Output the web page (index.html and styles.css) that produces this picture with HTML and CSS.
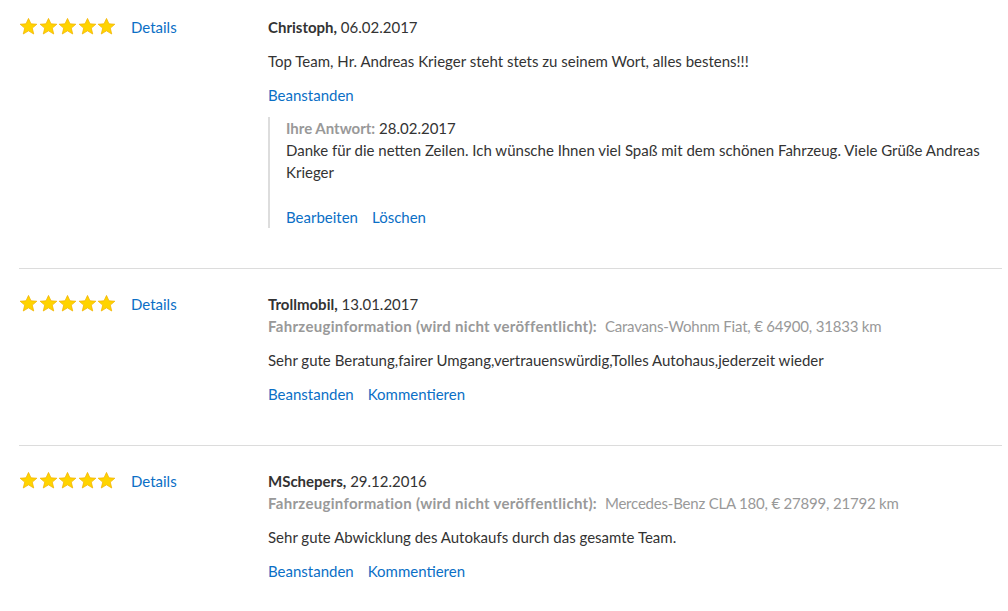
FILE: index.html
```html
<!DOCTYPE html>
<html lang="de">
<head>
  <meta charset="UTF-8">
  <title>Bewertungen</title>
  <link rel="stylesheet" href="styles.css">
</head>
<body>
  <div class="reviews">
    <div class="review">
      <div class="rating">
        <div class="stars">
          <svg viewBox="0 0 20 20"><polygon points="10,1.5 12.6,7.2 18.8,7.6 14,11.7 15.5,17.9 10,14.6 4.5,17.9 6,11.7 1.2,7.6 7.4,7.2"/></svg>
          <svg viewBox="0 0 20 20"><polygon points="10,1.5 12.6,7.2 18.8,7.6 14,11.7 15.5,17.9 10,14.6 4.5,17.9 6,11.7 1.2,7.6 7.4,7.2"/></svg>
          <svg viewBox="0 0 20 20"><polygon points="10,1.5 12.6,7.2 18.8,7.6 14,11.7 15.5,17.9 10,14.6 4.5,17.9 6,11.7 1.2,7.6 7.4,7.2"/></svg>
          <svg viewBox="0 0 20 20"><polygon points="10,1.5 12.6,7.2 18.8,7.6 14,11.7 15.5,17.9 10,14.6 4.5,17.9 6,11.7 1.2,7.6 7.4,7.2"/></svg>
          <svg viewBox="0 0 20 20"><polygon points="10,1.5 12.6,7.2 18.8,7.6 14,11.7 15.5,17.9 10,14.6 4.5,17.9 6,11.7 1.2,7.6 7.4,7.2"/></svg>
        </div>
        <a class="link" href="#">Details</a>
      </div>
      <div class="content">
        <div class="author"><strong>Christoph,</strong> 06.02.2017</div>
        <p class="text">Top Team, Hr. Andreas Krieger steht stets zu seinem Wort, alles bestens!!!</p>
        <div class="actions">
          <a class="link" href="#">Beanstanden</a>
        </div>
        <div class="reply">
          <div class="reply-meta"><span class="label">Ihre Antwort:</span> 28.02.2017</div>
          <div class="reply-text">Danke für die netten Zeilen. Ich wünsche Ihnen viel Spaß mit dem schönen Fahrzeug. Viele Grüße Andreas Krieger</div>
          <div class="actions reply-actions">
            <a class="link" href="#">Bearbeiten</a>
            <a class="link" href="#">Löschen</a>
          </div>
        </div>
      </div>
    </div>

    <div class="review">
      <div class="rating">
        <div class="stars">
          <svg viewBox="0 0 20 20"><polygon points="10,1.5 12.6,7.2 18.8,7.6 14,11.7 15.5,17.9 10,14.6 4.5,17.9 6,11.7 1.2,7.6 7.4,7.2"/></svg>
          <svg viewBox="0 0 20 20"><polygon points="10,1.5 12.6,7.2 18.8,7.6 14,11.7 15.5,17.9 10,14.6 4.5,17.9 6,11.7 1.2,7.6 7.4,7.2"/></svg>
          <svg viewBox="0 0 20 20"><polygon points="10,1.5 12.6,7.2 18.8,7.6 14,11.7 15.5,17.9 10,14.6 4.5,17.9 6,11.7 1.2,7.6 7.4,7.2"/></svg>
          <svg viewBox="0 0 20 20"><polygon points="10,1.5 12.6,7.2 18.8,7.6 14,11.7 15.5,17.9 10,14.6 4.5,17.9 6,11.7 1.2,7.6 7.4,7.2"/></svg>
          <svg viewBox="0 0 20 20"><polygon points="10,1.5 12.6,7.2 18.8,7.6 14,11.7 15.5,17.9 10,14.6 4.5,17.9 6,11.7 1.2,7.6 7.4,7.2"/></svg>
        </div>
        <a class="link" href="#">Details</a>
      </div>
      <div class="content">
        <div class="author"><strong>Trollmobil,</strong> 13.01.2017</div>
        <div class="vehicle"><span class="label">Fahrzeuginformation (wird nicht veröffentlicht):</span> <span class="value">Caravans-Wohnm Fiat, € 64900, 31833 km</span></div>
        <p class="text">Sehr gute Beratung,fairer Umgang,vertrauenswürdig,Tolles Autohaus,jederzeit wieder</p>
        <div class="actions">
          <a class="link" href="#">Beanstanden</a>
          <a class="link" href="#">Kommentieren</a>
        </div>
      </div>
    </div>

    <div class="review">
      <div class="rating">
        <div class="stars">
          <svg viewBox="0 0 20 20"><polygon points="10,1.5 12.6,7.2 18.8,7.6 14,11.7 15.5,17.9 10,14.6 4.5,17.9 6,11.7 1.2,7.6 7.4,7.2"/></svg>
          <svg viewBox="0 0 20 20"><polygon points="10,1.5 12.6,7.2 18.8,7.6 14,11.7 15.5,17.9 10,14.6 4.5,17.9 6,11.7 1.2,7.6 7.4,7.2"/></svg>
          <svg viewBox="0 0 20 20"><polygon points="10,1.5 12.6,7.2 18.8,7.6 14,11.7 15.5,17.9 10,14.6 4.5,17.9 6,11.7 1.2,7.6 7.4,7.2"/></svg>
          <svg viewBox="0 0 20 20"><polygon points="10,1.5 12.6,7.2 18.8,7.6 14,11.7 15.5,17.9 10,14.6 4.5,17.9 6,11.7 1.2,7.6 7.4,7.2"/></svg>
          <svg viewBox="0 0 20 20"><polygon points="10,1.5 12.6,7.2 18.8,7.6 14,11.7 15.5,17.9 10,14.6 4.5,17.9 6,11.7 1.2,7.6 7.4,7.2"/></svg>
        </div>
        <a class="link" href="#">Details</a>
      </div>
      <div class="content">
        <div class="author"><strong>MSchepers,</strong> 29.12.2016</div>
        <div class="vehicle"><span class="label">Fahrzeuginformation (wird nicht veröffentlicht):</span> <span class="value">Mercedes-Benz CLA 180, € 27899, 21792 km</span></div>
        <p class="text">Sehr gute Abwicklung des Autokaufs durch das gesamte Team.</p>
        <div class="actions">
          <a class="link" href="#">Beanstanden</a>
          <a class="link" href="#">Kommentieren</a>
        </div>
      </div>
    </div>
  </div>
</body>
</html>
```

FILE: styles.css
```css
* {
  box-sizing: border-box;
  margin: 0;
  padding: 0;
}

body {
  font-family: "Lato", "Liberation Sans", sans-serif;
  font-size: 15px;
  line-height: 22px;
  color: #333;
  background: #fff;
}

.reviews {
  width: 983px;
  margin-left: 19px;
}

.review {
  display: flex;
  padding: 24px 0 40px;
  border-bottom: 1px solid #dcdcdc;

  &:first-child {
    padding-top: 16px;
  }
}

.rating {
  width: 249px;
  flex-shrink: 0;
  display: flex;
  align-items: flex-start;
  gap: 15px;

  & > .stars {
    display: flex;
    gap: 0.5px;
    padding-top: 1px;

    svg {
      width: 19px;
      height: 19px;
      fill: #ffd400;
      stroke: #f2b200;
      stroke-width: 0.8;
      stroke-linejoin: round;
    }
  }
}

.link {
  color: #0b6fc6;
  text-decoration: none;
}

.content {
  flex: 1;

  & > .author strong {
    font-weight: 700;
  }

  & > .text {
    margin-top: 12px;
  }

  & > .actions {
    margin-top: 12px;
  }
}

.actions {
  display: flex;
  gap: 14px;
}

.label {
  color: #999;
  font-weight: 700;
}

.vehicle {
  color: #999;

  & > .label {
    margin-right: 4px;
    letter-spacing: 0.3px;
  }

  & > .value {
    letter-spacing: -0.2px;
  }
}

.reply {
  margin-top: 11px;
  border-left: 2px solid #ddd;
  padding-left: 16px;

  & > .reply-actions {
    margin-top: 23px;
  }
}
```
